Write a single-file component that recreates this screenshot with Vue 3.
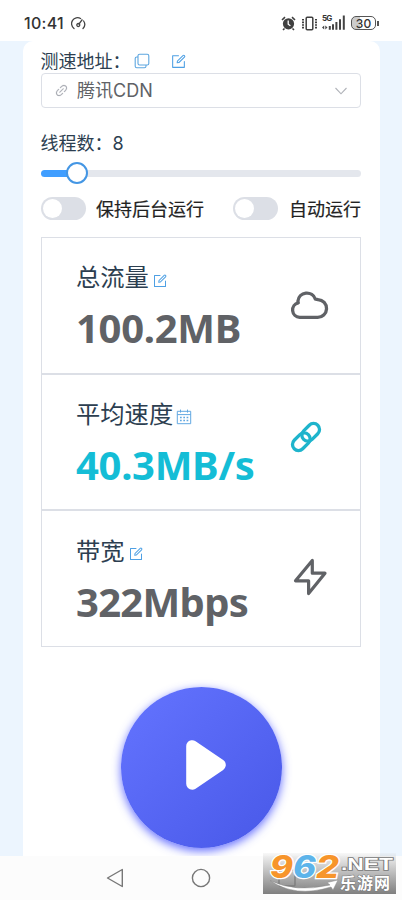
<script setup>
const editPaths = [
  'M832 512a32 32 0 1 1 64 0v352a32 32 0 0 1-32 32H160a32 32 0 0 1-32-32V160a32 32 0 0 1 32-32h352a32 32 0 0 1 0 64H192v640h640z',
  'm469.952 554.24 52.8-7.552L847.104 222.4a32 32 0 1 0-45.248-45.248L477.44 501.44l-7.552 52.8zm422.4-422.4a96 96 0 0 1 0 135.808l-331.84 331.84a32 32 0 0 1-18.112 9.088L436.8 623.68a32 32 0 0 1-36.224-36.224l15.104-105.6a32 32 0 0 1 9.024-18.112l331.904-331.84a96 96 0 0 1 135.744 0z'
]
const stats = [
  { key: 'total', label: '总流量', value: '100.2MB', icon: 'edit' },
  { key: 'speed', label: '平均速度', value: '40.3MB/s', icon: 'calendar' },
  { key: 'band', label: '带宽', value: '322Mbps', icon: 'edit' }
]
</script>

<template>
  <div class="screen">
    <header class="status">
      <span class="clock">10:41</span>
      <svg class="gauge" width="15" height="13" viewBox="0 0 15 13" fill="none" stroke="#444" stroke-width="1.3" stroke-linecap="round">
        <path d="M3 11.5A6 6 0 0 1 9.6 1.5M12.6 4A6 6 0 0 1 12 11.5" />
        <path d="M11 2.8 8 7" /><circle cx="7.3" cy="8" r="1.5" />
      </svg>
      <div class="sys">
        <svg width="15" height="15" viewBox="0 0 15 15" fill="none">
          <circle cx="7.5" cy="7.8" r="5.6" fill="#3f3f3f" />
          <path d="M1 4 4 1.2M14 4 11 1.2M3.5 12.5 2 14M11.5 12.5 13 14" stroke="#3f3f3f" stroke-width="1.6" />
          <path d="M7.2 4.6v3.6l2.2 1.6" stroke="#fff" stroke-width="1.3" />
        </svg>
        <svg class="vib" width="17" height="15" viewBox="0 0 17 15" fill="none" stroke="#3f3f3f">
          <rect x="5.2" y="1.2" width="6.6" height="12.6" rx="1" stroke-width="1.5" />
          <path d="M2 3v10M15 3v10" stroke-width="2" stroke-dasharray="1.6 1" />
        </svg>
        <div class="cell">
          <span class="gen">5G</span>
          <svg width="24" height="16" viewBox="0 0 24 16" fill="#444">
            <path d="M0 12.5l2.2-2v4zM5.5 12.5l-2.2-2v4zM6.8 11h2v3.8h-2zM10 9.2h2v5.6h-2zM13.4 7h2v7.8h-2zM17 4.2h2v10.6h-2zM20.8.6h2v14.2h-2z" />
          </svg>
        </div>
        <div class="battery"><span>30</span></div>
        <i class="battery-tip"></i>
      </div>
    </header>

    <main class="page">
      <section class="card">
        <div class="addr">
          <span class="label">测速地址：</span>
          <svg class="copy" width="16" height="16" viewBox="0 0 16 16" fill="none" stroke="#5da6e0" stroke-width="1.1">
            <rect x="4" y="1.2" width="10.8" height="10.8" rx="1.6" />
            <path d="M4 4H2.8Q1.2 4 1.2 5.6v7.6q0 1.6 1.6 1.6h7.6q1.6 0 1.6-1.6V12" />
          </svg>
          <svg class="ic" width="17" height="17" viewBox="0 0 1024 1024"><path v-for="p in editPaths" :key="p" :d="p" /></svg>
        </div>

        <div class="select">
          <svg width="15" height="15" viewBox="0 0 1024 1024" fill="#a8abb2" stroke="#a8abb2" stroke-width="14">
            <path d="M715.648 625.152 670.4 579.904l90.496-90.56c75.008-74.944 85.12-186.368 22.656-248.896-62.528-62.464-173.952-52.352-248.96 22.656L444.16 353.6l-45.248-45.248 90.496-90.496c100.032-99.968 251.968-110.08 339.456-22.656 87.488 87.488 77.312 239.424-22.656 339.456l-90.496 90.496zm-90.496 90.496-90.496 90.496C434.624 906.112 282.688 916.224 195.2 828.8c-87.488-87.488-77.312-239.424 22.656-339.456l90.496-90.496 45.248 45.248-90.496 90.56c-75.008 74.944-85.12 186.368-22.656 248.896 62.528 62.464 173.952 52.352 248.96-22.656l90.496-90.496zm0-362.048 45.248 45.248L398.848 670.4 353.6 625.152z" />
          </svg>
          <span class="picked">腾讯CDN</span>
          <svg width="14" height="8" viewBox="0 0 14 8" fill="none" stroke="#b0b3b9" stroke-width="1.1"><path d="M1.5 1 7 6.8 12.5 1" /></svg>
        </div>

        <div class="threads">线程数：8</div>
        <div class="slider"><div class="fill"></div><div class="thumb"></div><div class="rest"></div></div>

        <div class="switches">
          <div class="sw"><i></i></div><span>保持后台运行</span>
          <div class="sw second"><i></i></div><span>自动运行</span>
        </div>

        <div class="stats">
          <article v-for="s in stats" :key="s.key" class="stat" :class="s.key">
            <div class="info">
              <div class="title">
                <span>{{ s.label }}</span>
                <svg v-if="s.icon === 'edit'" class="ic" width="16" height="16" viewBox="0 0 1024 1024"><path v-for="p in editPaths" :key="p" :d="p" /></svg>
                <svg v-else width="16" height="16" viewBox="0 0 16 16" fill="none" stroke="#62a8e2">
                  <path d="M1.3 2.3h13.4v12.4H1.3zM1.3 5.6h13.4M4.5.6v3M11.5.6v3" />
                  <path d="M4 8.5h8.5M4 11.5h8.5" stroke-width="1.4" stroke-dasharray="1.7 1.6" />
                </svg>
              </div>
              <div class="value">{{ s.value }}</div>
            </div>
            <svg v-if="s.key === 'total'" class="big" width="40" height="34" viewBox="0 0 40 34" fill="none" stroke="#606266" stroke-width="3.3" stroke-linejoin="round">
              <path d="M10.7 30.4H28.3A8.9 8.9 0 0 0 29 12.6Q27.6 12.2 26.4 12.2A9 9 0 0 0 8.9 14.2Q9 15 9.3 15.8A7.4 7.4 0 0 0 10.7 30.4Z" />
            </svg>
            <svg v-else-if="s.key === 'speed'" class="big" width="34" height="34" viewBox="0 0 34 34" fill="none" stroke="#1eb4cc" stroke-width="3.3">
              <rect x="-10" y="-6" width="20" height="12" rx="6" transform="translate(21.7 12.3) rotate(-45)" />
              <rect x="-10" y="-6" width="20" height="12" rx="6" transform="translate(12.3 21.7) rotate(-45)" />
            </svg>
            <svg v-else class="big" width="36" height="40" viewBox="0 0 36 40" fill="none" stroke="#606266" stroke-width="3.2" stroke-linejoin="round">
              <path d="M20.3 3.4 3.5 23.8H16.6V36.6L33 16.2H20.3Z" />
            </svg>
          </article>
        </div>

        <button class="play" aria-label="play">
          <svg width="42" height="52" viewBox="0 0 42 52"><path d="M7.2 7.2v37.6L34.8 26Z" fill="#fff" stroke="#fff" stroke-width="12" stroke-linejoin="round" /></svg>
        </button>
      </section>
    </main>

    <nav class="nav">
      <svg width="18" height="20" viewBox="0 0 18 20" fill="none" stroke="#777" stroke-width="1.4" stroke-linejoin="round"><path d="M16.3 1.5v17L1.5 10z" /></svg>
      <svg class="home" width="20" height="20" viewBox="0 0 20 20" fill="none" stroke="#777" stroke-width="1.4"><circle cx="10" cy="10" r="8.6" /></svg>
      <svg class="recent" width="18" height="18" viewBox="0 0 18 18" fill="none" stroke="#777" stroke-width="1.4"><rect x="1" y="1" width="16" height="16" rx="1" /></svg>
    </nav>

    <div class="mark">
      <svg width="133" height="41" viewBox="0 0 133 41">
        <path d="M7 27.5Q33 40 67 32L64 29.5 75 27 70 37 68 34Q32 45 7 27.5Z" fill="#fff" stroke="#888" stroke-width=".5" />
        <g class="digits">
          <text x="7" y="25" textLength="23" lengthAdjust="spacingAndGlyphs" fill="#f7952b">9</text>
          <text x="30" y="25" textLength="23" lengthAdjust="spacingAndGlyphs" fill="#5db4ea">6</text>
          <text x="53" y="25" textLength="23" lengthAdjust="spacingAndGlyphs" fill="#f7952b">2</text>
        </g>
        <text class="net" x="78" y="17" textLength="52" lengthAdjust="spacingAndGlyphs">.NET</text>
        <text class="cn" x="77" y="36" textLength="50">乐游网</text>
      </svg>
    </div>
  </div>
</template>

<style>
body { margin: 0; background: #fff; }
</style>

<style scoped>
.screen { position: relative; width: 402px; height: 900px; overflow: hidden; display: flex; flex-direction: column; font-family: Inter, "Noto Sans CJK SC", sans-serif; color: #2c3e50; }
.screen * { box-sizing: border-box; }
svg { display: block; flex: none; }
.status { height: 41px; flex: none; display: flex; align-items: center; padding: 5px 23px 0 24px; background: #fff; color: #333; }
.clock { font-size: 16px; font-weight: 500; letter-spacing: .3px; width: 47px; white-space: nowrap; }
.gauge { flex: none; }
.sys { margin-left: auto; display: flex; align-items: center; }
.vib { margin-left: 5px; }
.cell { position: relative; margin-left: 4px; }
.gen { position: absolute; left: 0; top: -1px; font-size: 8px; line-height: 9px; font-weight: 700; letter-spacing: -.8px; }
.battery { width: 25px; height: 14px; margin-left: 5px; border: 1.5px solid #555; border-radius: 5px; display: flex; align-items: center; justify-content: center; font-size: 12px; font-weight: 500; background: linear-gradient(90deg, #ccc 35%, #fff 35%); }
.battery-tip { width: 2px; height: 5px; background: #555; margin-left: 1px; }
.page { flex: none; height: 815px; background: #ecf5fe; padding: 0 22.5px; overflow: hidden; }
.card { height: 815px; background: #fff; border-radius: 10px 10px 0 0; padding: 8px 18.5px 0; display: flex; flex-direction: column; }
.addr { height: 24px; display: flex; align-items: center; }
.label { font-size: 18px; line-height: 24px; width: 93px; margin-top: 2px; margin-left: -.5px; white-space: nowrap; }
.copy { margin-right: 20px; }
.ic { fill: #4ea0e4; }
.select { height: 35px; border: 1px solid #dcdfe6; border-radius: 4px; display: flex; align-items: center; padding: 0 12px; color: #606266; }
.picked { flex: 1; margin-left: 8px; font-size: 18px; line-height: 24px; }
.threads { margin-top: 24px; height: 24px; line-height: 24px; font-size: 18px; margin-left: -.5px; }
.slider { height: 26px; margin-top: 4px; display: flex; align-items: center; }
.fill { width: 26px; height: 7px; margin-right: -1px; border-radius: 4px 0 0 4px; background: #409eff; }
.thumb { width: 22px; height: 22px; border: 2px solid #4496e4; border-radius: 50%; background: #fff; position: relative; z-index: 1; }
.rest { flex: 1; height: 7px; margin-left: -1px; border-radius: 0 4px 4px 0; background: #e4e7ed; }
.switches { height: 24px; margin-top: 10px; display: flex; align-items: center; font-size: 18px; line-height: 24px; color: #222; -webkit-text-stroke: .2px #222; white-space: nowrap; }
.switches span { margin-top: 4px; }
.sw { width: 45px; height: 23px; border-radius: 12px; background: #dcdfe6; padding: 2px; margin-right: 10px; flex: none; }
.sw i { display: block; width: 19px; height: 19px; border-radius: 50%; background: #fff; }
.second { margin-left: 29px; margin-right: 11px; }
.stats { margin-top: 17px; border: 1px solid #dcdfe6; height: 410px; flex: none; }
.stat { height: 136.5px; display: flex; align-items: center; padding-left: 34px; border-bottom: 2px solid #dcdfe6; position: relative; }
.stat:last-child { border-bottom: 0; height: 135px; }
.info { flex: 1; padding-top: 6px; }
.title { height: 32px; display: flex; align-items: center; font-size: 24.3px; line-height: 32px; }
.title svg { margin: 7px 0 0 3px; }
.value { margin-top: 8px; height: 54px; line-height: 54px; font-family: "Noto Sans", sans-serif; font-size: 40px; font-weight: 700; letter-spacing: -.3px; color: #606266; white-space: nowrap; }
.speed .value { color: #14bdd6; }
.band .value { letter-spacing: -.7px; }
.total .big { margin-right: 31px; margin-top: -3px; }
.speed .big { margin-right: 37px; margin-top: -9px; }
.band .big { margin-right: 32px; margin-top: -4px; }
.play { width: 161px; height: 161px; flex: none; margin: 40px 0 0 79.5px; border: 0; border-radius: 50%; background: linear-gradient(135deg, #6474ff, #4858e8); box-shadow: 0 3px 10px rgba(64, 76, 255, .8); display: flex; align-items: center; justify-content: center; padding: 0 0 5px 10px; }
.nav { height: 44px; flex: none; background: #fcfcfc; display: flex; align-items: center; padding-left: 106px; }
.home { margin-left: 67px; }
.recent { margin-left: 67px; }
.mark { position: absolute; left: 263px; top: 853px; width: 133px; height: 41px; background: linear-gradient(rgba(220, 220, 220, .2), rgba(120, 120, 120, .95)); }
.digits { font: italic 800 31px Inter, sans-serif; stroke: #fff; stroke-width: 2.5px; paint-order: stroke; }
.net { font: 700 16px "Liberation Sans", sans-serif; fill: #fff; stroke: #777; stroke-width: 1.5px; paint-order: stroke; }
.cn { font: 700 16px "Noto Sans CJK SC", sans-serif; fill: #fff; stroke: #777; stroke-width: 1px; paint-order: stroke; }
</style>
